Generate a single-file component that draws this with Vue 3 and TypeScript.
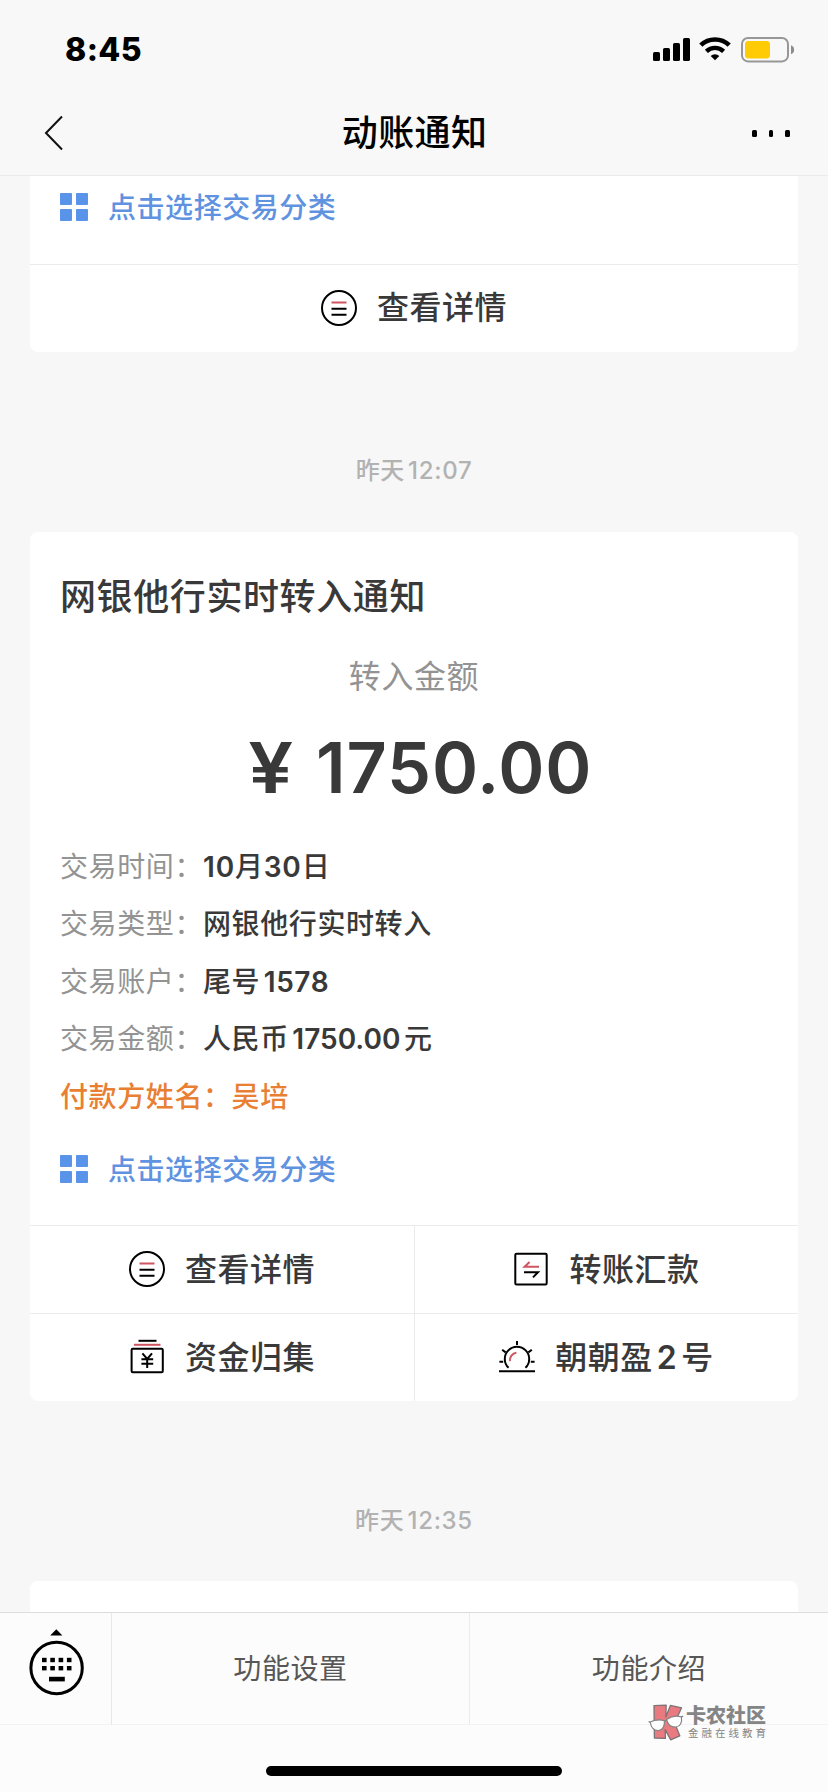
<script setup lang="ts">
interface Detail {
  label: string
  value: string
  spacing?: 'tight' | 'money'
}
interface Action {
  icon: 'detail' | 'transfer' | 'collect' | 'sunrise'
  text: string
}

const details: Detail[] = [
  { label: '交易时间：', value: '10月30日', spacing: 'tight' },
  { label: '交易类型：', value: '网银他行实时转入' },
  { label: '交易账户：', value: '尾号1578' },
  { label: '交易金额：', value: '人民币1750.00元', spacing: 'money' },
]

const actions: Action[] = [
  { icon: 'detail', text: '查看详情' },
  { icon: 'transfer', text: '转账汇款' },
  { icon: 'collect', text: '资金归集' },
  { icon: 'sunrise', text: '朝朝盈2号' },
]

const keyColumns = [0, 1, 2, 3]

// Splits a text into runs of digits and runs of other characters.
const runs = (text: string) =>
  (text.match(/[\d.]+|[^\d.]+/g) ?? []).map((t) => ({ t, num: /\d/.test(t) }))
</script>

<template>
  <div class="screen">
    <header class="top">
      <div class="status">
        <span class="clock">8:45</span>
        <div class="indicators">
          <svg class="signal" width="37" height="24" viewBox="0 0 37 24">
            <rect x="0" y="14" width="7" height="9" rx="1.6" />
            <rect x="10" y="10" width="7" height="13" rx="1.6" />
            <rect x="20" y="5" width="7" height="18" rx="1.6" />
            <rect x="30" y="0" width="7" height="23" rx="1.6" />
          </svg>
          <svg class="wifi" width="32" height="24" viewBox="0 0 32 24">
            <path d="M1.8 8.2 A20.4 20.4 0 0 1 30.2 8.2" fill="none" stroke="#000" stroke-width="4.6" />
            <path d="M7.4 14.3 A12.4 12.4 0 0 1 24.6 14.3" fill="none" stroke="#000" stroke-width="4.4" />
            <path d="M16 23.2 L11.7 18.9 A6.2 6.2 0 0 1 20.3 18.9 Z" />
          </svg>
          <svg class="battery" width="54" height="26" viewBox="0 0 54 26">
            <rect x="1" y="1" width="46" height="23.4" rx="6" fill="none" stroke="#979797" stroke-width="2" />
            <rect x="4" y="4" width="25" height="17.4" rx="3.4" fill="#fecb05" />
            <path d="M50 8.2 A4.8 4.8 0 0 1 50 17.2 Z" fill="#8c8c8c" />
          </svg>
        </div>
      </div>
      <nav class="nav">
        <svg class="back" width="20" height="36" viewBox="0 0 20 36">
          <path d="M18 1.5 L2 18 L18 34.5" fill="none" stroke="#111" stroke-width="2" />
        </svg>
        <h1 class="nav-title">动账通知</h1>
        <div class="more"><i></i><i></i><i></i></div>
      </nav>
    </header>

    <main class="feed">
      <section class="card card-first">
        <div class="classify">
          <span class="tiles"><i></i><i></i><i></i><i></i></span>
          <span class="classify-text">点击选择交易分类</span>
        </div>
        <div class="actions single">
          <div class="action">
            <svg class="icon" width="36" height="36" viewBox="0 0 36 36">
              <circle cx="18" cy="18" r="17" />
              <path class="red" d="M10.5 12.5 H25.5" />
              <path d="M10.5 18.7 H25.5 M10.5 24.7 H25.5" />
            </svg>
            <span class="action-text">查看详情</span>
          </div>
        </div>
      </section>

      <p class="stamp stamp-a">昨天12:07</p>

      <section class="card card-main">
        <h2 class="card-title">网银他行实时转入通知</h2>
        <p class="amount-label">转入金额</p>
        <p class="amount"><span class="yen">¥</span><span>1750.00</span></p>
        <dl class="details">
          <div v-for="d in details" :key="d.label" class="row">
            <dt>{{ d.label }}</dt>
            <dd :class="d.spacing"><span v-for="(r, i) in runs(d.value)" :key="i" :class="{ num: r.num }">{{ r.t }}</span></dd>
          </div>
          <div class="row payer">
            <dt>付款方姓名：</dt>
            <dd>吴培</dd>
          </div>
        </dl>
        <div class="classify">
          <span class="tiles"><i></i><i></i><i></i><i></i></span>
          <span class="classify-text">点击选择交易分类</span>
        </div>
        <div class="actions">
          <div v-for="a in actions" :key="a.text" class="action">
            <svg class="icon" width="36" height="36" viewBox="0 0 36 36">
              <template v-if="a.icon === 'detail'">
                <circle cx="18" cy="18" r="17" />
                <path class="red" d="M10.5 12.5 H25.5" />
                <path d="M10.5 18.7 H25.5 M10.5 24.7 H25.5" />
              </template>
              <template v-else-if="a.icon === 'transfer'">
                <rect x="2.3" y="2.8" width="31.4" height="30.6" rx="1.2" />
                <path class="red" d="M26 15.8 H11.6 L16.6 11" />
                <path d="M11 21.3 H25 L20 26.4" />
              </template>
              <template v-else-if="a.icon === 'collect'">
                <path d="M9.5 1.8 H27.5" />
                <path class="red" d="M5 5.8 H31.5" />
                <rect x="2.6" y="9.8" width="31.2" height="23.4" rx="1.2" />
                <path d="M13.4 14.4 L18.2 20 L23 14.4 M18.2 20 V29 M12.4 20.2 H24.2 M12.4 24.8 H24.2" />
              </template>
              <template v-else>
                <path d="M0 32.3 H36" />
                <path d="M9.6 28.8 A12.2 12.2 0 1 1 26.4 28.8" />
                <path class="red" d="M11 22.2 A7.4 7.4 0 0 1 17.4 13.8" />
                <path d="M18 2 V6 M3.2 10.8 L6.6 13.4 M32.8 10.8 L29.4 13.4 M0.4 22.8 H4.2 M31.8 22.8 H35.6" />
              </template>
            </svg>
            <span class="action-text"><span v-for="(r, i) in runs(a.text)" :key="i" :class="{ num: r.num }">{{ r.t }}</span></span>
          </div>
        </div>
      </section>

      <p class="stamp stamp-b">昨天12:35</p>

      <section class="card card-next"></section>
    </main>

    <footer class="bottom">
      <div class="menu">
        <div class="keyboard">
          <svg width="56" height="68" viewBox="0 0 56 68">
            <path d="M28.3 0.2 L34.4 6.4 H22.2 Z" />
            <circle cx="28.6" cy="39" r="25.7" fill="none" stroke="#000" stroke-width="3" />
            <g v-for="c in keyColumns" :key="c">
              <rect :x="14 + c * 8.3" y="28.8" width="4.6" height="4.4" />
              <rect :x="14 + c * 8.3" y="37" width="4.6" height="4.4" />
            </g>
            <rect x="21" y="47.8" width="15.8" height="4.6" />
          </svg>
        </div>
        <div class="tab tab-set">功能设置</div>
        <div class="tab tab-about">功能介绍</div>
      </div>
      <div class="home"></div>
    </footer>

    <aside class="mark">
      <svg width="36" height="37" viewBox="0 0 36 37">
        <g fill="#e97a80" stroke="#7d7375" stroke-width="1.3" stroke-linejoin="round">
          <path d="M6 1.6 L18.2 1.2 L17.8 13 L22.4 1.4 L33.6 3.8 L26.6 19 L31.8 31.8 L22.6 35.8 L17.2 25.6 L17.4 34.4 L6.4 34 Z" />
        </g>
        <g fill="#fff" stroke="#858585" stroke-width="1.2">
          <path d="M2.2 18 Q9 14.8 16.4 16.6 Q17 25.4 10.6 26.6 Q3.6 26.8 2.2 18 Z" />
          <path d="M18.6 15.4 Q25.4 10.8 33.4 12.8 Q34.8 21.6 27.6 23.2 Q20.2 23.2 18.6 15.4 Z" />
          <path d="M16.4 17.6 L18.6 16 M0.6 17.4 L2.2 18.4 M33.4 13.2 L35.2 12" fill="none" />
        </g>
      </svg>
      <div class="mark-text">
        <strong>卡农社区</strong>
        <small>金融在线教育</small>
      </div>
    </aside>
  </div>
</template>

<style>
html,
body {
  margin: 0;
  background: #f7f7f7;
}
</style>

<style scoped>
.screen {
  position: relative;
  display: flex;
  flex-direction: column;
  width: 828px;
  height: 1792px;
  overflow: hidden;
  background: #f7f7f7;
  color: #393939;
  font-family: Inter, 'Noto Sans CJK SC', sans-serif;
  font-weight: 500;
  text-autospace: normal;
}
h1, h2, p, dl, dd {
  margin: 0;
}
svg {
  display: block;
  flex: none;
}
.num {
  font-weight: 600;
}
.top {
  flex: none;
  box-sizing: border-box;
  height: 176px;
  border-bottom: 1px solid #ebebeb;
  background: #f8f8f8;
  color: #000;
}
.status {
  display: flex;
  justify-content: space-between;
  height: 88px;
  padding: 0 33px 0 65px;
}
.clock {
  margin-top: 30px;
  font-size: 32px;
  line-height: 40px;
  font-weight: 800;
  letter-spacing: 0.4px;
}
.indicators {
  display: flex;
  align-items: flex-start;
  padding-top: 37px;
}
.signal {
  margin-top: 1px;
}
.wifi {
  margin-left: 9px;
}
.battery {
  margin-left: 10px;
}
.nav {
  display: flex;
  align-items: center;
  justify-content: space-between;
  height: 87px;
  padding: 0 38px 0 44px;
}
.back {
  margin-top: 2px;
}
.nav-title {
  margin: 2px 0 0 13px;
  font-size: 36px;
  line-height: 50px;
  font-weight: 500;
  letter-spacing: 0.4px;
}
.more {
  display: flex;
  gap: 12px;
  margin-top: 3px;
}
.more i {
  width: 4.6px;
  height: 7px;
  border-radius: 1.5px;
  background: #000;
}
.feed {
  flex: 1;
  min-height: 0;
  overflow: hidden;
  padding: 0 30px;
}
.card {
  background: #fff;
  border-radius: 8px;
}
.card-first {
  padding-top: 17px;
  border-radius: 0 0 8px 8px;
}
.card-first .classify {
  margin-bottom: 43px;
}
.card-first .action {
  padding-bottom: 2px;
}
.classify {
  display: flex;
  align-items: center;
  height: 28px;
  padding-left: 30px;
  color: #5f92df;
  font-size: 28px;
  letter-spacing: 0.55px;
}
.classify-text {
  margin-top: -2px;
}
.tiles {
  display: grid;
  grid-template-columns: 12px 12px;
  gap: 4px;
  margin-right: 20px;
}
.tiles i {
  height: 12px;
  border-radius: 1px;
  background: #5a94ea;
}
.actions {
  display: grid;
  grid-template-columns: 385px 1fr;
}
.actions.single {
  grid-template-columns: 1fr;
}
.action {
  display: flex;
  align-items: center;
  justify-content: center;
  gap: 20px;
  box-sizing: border-box;
  height: 88px;
  border-top: 1px solid #ebebeb;
  font-size: 32px;
  letter-spacing: 0.5px;
}
.action-text {
  margin-top: -5px;
}
.actions:not(.single) .action:nth-child(odd) {
  border-right: 1px solid #ebebeb;
}
.icon {
  fill: none;
  stroke: #000;
  stroke-width: 2;
}
.icon .red {
  stroke: #cf5560;
}
.stamp {
  text-align: center;
  color: #b2b2b2;
  font-size: 24px;
  line-height: 34px;
  letter-spacing: 0.7px;
}
.stamp-a {
  margin: 102px 0 44px;
}
.stamp-b {
  margin: 103px 0 43px;
}
.card-title {
  padding: 40px 30px 0;
  font-size: 36px;
  line-height: 50px;
  font-weight: 500;
  letter-spacing: 0.6px;
}
.amount-label {
  margin-top: 32px;
  text-align: center;
  color: #939393;
  font-size: 32px;
  line-height: 46px;
  font-weight: 400;
  letter-spacing: 0.6px;
}
.amount {
  display: flex;
  justify-content: center;
  gap: 25px;
  margin-top: 24px;
  padding-left: 15px;
  font-size: 70px;
  line-height: 88px;
  font-weight: 600;
  letter-spacing: 0.9px;
}
.yen {
  transform: scaleX(1.14);
}
.details {
  margin-top: 27px;
  padding-left: 30px;
}
.row {
  display: flex;
  height: 57.4px;
  font-size: 28px;
  line-height: 57px;
  letter-spacing: 0.6px;
}
.row dt {
  color: #939393;
  font-weight: 400;
}
.row.payer,
.row.payer dt {
  color: #e87f33;
  font-weight: 500;
}
.tight {
  text-autospace: no-autospace;
  letter-spacing: 0.8px;
}
.money .num {
  letter-spacing: 0;
}
.card-main .classify {
  margin: 29px 0 42px;
}
.card-next {
  height: 60px;
}
.bottom {
  flex: none;
  height: 180px;
  background: #fcfcfc;
}
.menu {
  display: grid;
  grid-template-columns: 112px 358px 1fr;
  box-sizing: border-box;
  height: 113px;
  border-top: 1px solid #dcdcdc;
  border-bottom: 1px solid #f3f3f3;
}
.keyboard {
  padding: 16px 0 0 28px;
  border-right: 1px solid #e8e8e8;
}
.tab {
  color: #575757;
  font-size: 28px;
  line-height: 112px;
  letter-spacing: 0.6px;
  text-align: center;
  font-weight: 400;
}
.tab-set {
  border-right: 1px solid #ebebeb;
}
.home {
  width: 296px;
  height: 10px;
  margin: 41px auto 0;
  border-radius: 5px;
  background: #000;
}
.mark {
  position: absolute;
  left: 648px;
  top: 1704px;
  display: flex;
  gap: 2px;
  color: #858585;
}
.mark-text {
  display: flex;
  flex-direction: column;
}
.mark strong {
  font-size: 20px;
  line-height: 24px;
  font-weight: 900;
}
.mark small {
  margin-left: 2px;
  font-size: 10.5px;
  line-height: 12px;
  letter-spacing: 3px;
  font-weight: 400;
}
</style>
